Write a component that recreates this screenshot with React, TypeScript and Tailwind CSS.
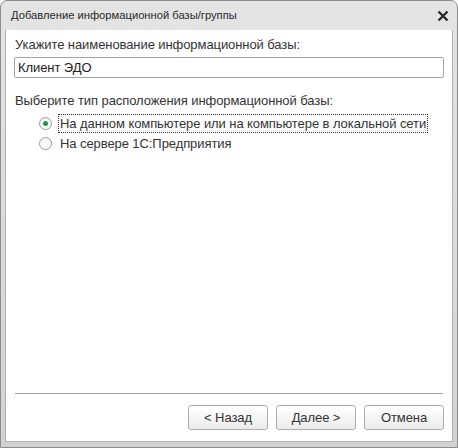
import React from "react";

function Radio({ checked }: { checked?: boolean }) {
  return (
    <span className="relative flex h-[13px] w-[13px] shrink-0 items-center justify-center rounded-full border border-[#9a9a9a] bg-gradient-to-b from-[#f4f4f4] to-white">
      {checked && <span className="h-[5px] w-[5px] rounded-full bg-[#1f9a4a]" />}
    </span>
  );
}

function Btn({ children }: { children: React.ReactNode }) {
  return (
    <button className="flex h-[25px] w-[80px] items-center justify-center rounded-[3px] border border-[#acacac] bg-gradient-to-b from-white to-[#ececec] text-[13px] text-[#333]">
      {children}
    </button>
  );
}

export default function App() {
  return (
    <div
      className="flex h-[448px] w-[458px] flex-col overflow-hidden rounded-t-[7px] border border-[#8c8c8c] bg-gradient-to-b from-[#e4e4e4] to-[#d2d2d2]"
      style={{ fontFamily: '"Liberation Sans", Arial, sans-serif' }}
    >
      <div className="flex h-[29px] shrink-0 items-center justify-between pl-[10px] pr-[8px]">
        <span className="text-[11.2px] text-[#2a2a2a]">Добавление информационной базы/группы</span>
        <svg width="12" height="12" viewBox="0 0 12 12">
          <path d="M1.5 1.5 L10.5 10.5 M10.5 1.5 L1.5 10.5" stroke="#2a2a2a" strokeWidth="2.4" strokeLinecap="butt" />
        </svg>
      </div>
      <div className="flex flex-1 px-[4px] pb-[5px]">
        <div className="flex flex-1 flex-col border-l border-r border-b border-[#b0b0b0] bg-white px-[8px] pb-[11px] text-[13px] tracking-[-0.08px] text-[#333]">
          <div className="mt-[7px] pl-[1px] leading-[16px]">Укажите наименование информационной базы:</div>
          <div className="mt-[4px] flex h-[21px] items-center rounded-[2px] border border-[#a3a3a3] px-[3px] text-[#222]">
            Клиент ЭДО
          </div>
          <div className="mt-[15px] pl-[1px] leading-[16px]">Выберите тип расположения информационной базы:</div>
          <div className="mt-[5px] flex items-center pl-[25px]">
            <Radio checked />
            <span className="ml-[6px] border border-dotted border-[#333] px-[1px] leading-[17px]">
              На данном компьютере или на компьютере в локальной сети
            </span>
          </div>
          <div className="mt-[2px] flex items-center pl-[25px]">
            <Radio />
            <span className="ml-[7px] px-[1px] leading-[17px]">На сервере 1С:Предприятия</span>
          </div>
          <div className="flex-1" />
          <div className="mx-[1px] h-px bg-[#a0a0a0]" />
          <div className="mt-[11px] flex justify-end gap-[8px]">
            <Btn>&lt; Назад</Btn>
            <Btn>Далее &gt;</Btn>
            <Btn>Отмена</Btn>
          </div>
        </div>
      </div>
    </div>
  );
}
